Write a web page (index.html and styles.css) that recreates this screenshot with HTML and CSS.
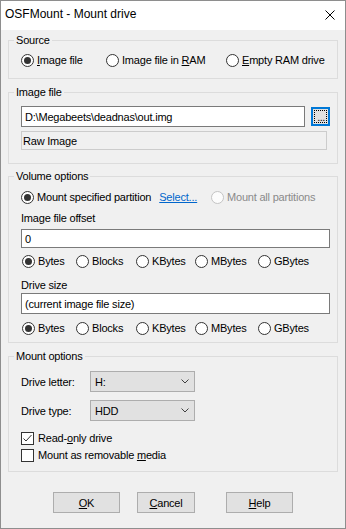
FILE: index.html
```html
<!DOCTYPE html>
<html>
<head>
<meta charset="utf-8">
<title>OSFMount - Mount drive</title>
<link rel="stylesheet" href="styles.css">
</head>
<body>
<div class="window">
  <div class="titlebar">
    <span class="title">OSFMount - Mount drive</span>
    <svg class="close" width="10" height="10" viewBox="0 0 10 10"><path d="M0.5 0.5L9.5 9.5M9.5 0.5L0.5 9.5" stroke="#000" stroke-width="1" fill="none"/></svg>
  </div>
  <div class="client">
    <fieldset class="group g-source">
      <legend>Source</legend>
      <div class="content row-source">
        <span class="opt"><span class="radio on"></span><span><u>I</u>mage file</span></span>
        <span class="opt"><span class="radio"></span><span>Image file in <u>R</u>AM</span></span>
        <span class="opt"><span class="radio"></span><span><u>E</u>mpty RAM drive</span></span>
      </div>
    </fieldset>

    <fieldset class="group g-file">
      <legend>Image file</legend>
      <div class="content">
        <div class="filerow">
          <div class="input file-input">D:\Megabeets\deadnas\out.img</div>
          <div class="browse"><span class="focus">...</span></div>
        </div>
        <div class="readonly">Raw Image</div>
      </div>
    </fieldset>

    <fieldset class="group g-volume">
      <legend>Volume options</legend>
      <div class="content">
        <div class="row-part">
          <span class="opt"><span class="radio on"></span><span>Mount specified partition</span><a class="link">Select...</a></span>
          <span class="opt disabled"><span class="radio dis"></span><span>Mount all partitions</span></span>
        </div>
        <div class="lbl lbl-offset">Image file offset</div>
        <div class="input offset-input">0</div>
        <div class="row-units units-1">
          <span class="opt"><span class="radio on"></span><span>Bytes</span></span>
          <span class="opt"><span class="radio"></span><span>Blocks</span></span>
          <span class="opt"><span class="radio"></span><span>KBytes</span></span>
          <span class="opt"><span class="radio"></span><span>MBytes</span></span>
          <span class="opt"><span class="radio"></span><span>GBytes</span></span>
        </div>
        <div class="lbl lbl-size">Drive size</div>
        <div class="input size-input">(current image file size)</div>
        <div class="row-units units-2">
          <span class="opt"><span class="radio on"></span><span>Bytes</span></span>
          <span class="opt"><span class="radio"></span><span>Blocks</span></span>
          <span class="opt"><span class="radio"></span><span>KBytes</span></span>
          <span class="opt"><span class="radio"></span><span>MBytes</span></span>
          <span class="opt"><span class="radio"></span><span>GBytes</span></span>
        </div>
      </div>
    </fieldset>

    <fieldset class="group g-mount">
      <legend>Mount options</legend>
      <div class="content">
        <div class="mrow">
          <span>Drive letter:</span>
          <div class="select"><span>H:</span><svg width="8" height="5" viewBox="0 0 8 5"><path d="M0.5 0.5L4 4L7.5 0.5" stroke="#404040" fill="none"/></svg></div>
        </div>
        <div class="mrow mrow-2">
          <span>Drive type:</span>
          <div class="select"><span>HDD</span><svg width="8" height="5" viewBox="0 0 8 5"><path d="M0.5 0.5L4 4L7.5 0.5" stroke="#404040" fill="none"/></svg></div>
        </div>
        <div class="crow crow-1">
          <span class="check"><svg width="11" height="11" viewBox="0 0 11 11"><path d="M1.5 5.5L4 8L9.5 2" stroke="#333" stroke-width="1" fill="none"/></svg></span>
          <span>Read-<u>o</u>nly drive</span>
        </div>
        <div class="crow crow-2">
          <span class="check"></span>
          <span>Mount as removable <u>m</u>edia</span>
        </div>
      </div>
    </fieldset>

    <div class="buttons">
      <div class="btn btn-ok"><span><u>O</u>K</span></div>
      <div class="btn btn-cancel"><span><u>C</u>ancel</span></div>
      <div class="btn btn-help"><span><u>H</u>elp</span></div>
    </div>
  </div>
</div>
</body>
</html>
```

FILE: styles.css
```css
* { box-sizing: border-box; }
html, body { margin: 0; padding: 0; }
body {
  width: 346px;
  height: 529px;
  font-family: "Liberation Sans", Arial, sans-serif;
  font-size: 11px;
  color: #000;
  background: #fff;
}
.window {
  width: 346px;
  height: 529px;
  border: 1px solid #8e8e8e;
  background: #f0f0f0;
  display: flex;
  flex-direction: column;
}
.titlebar {
  flex: none;
  height: 29px;
  background: #fff;
  display: flex;
  align-items: center;
  justify-content: space-between;
  padding: 0 10px 3px 4px;
}
.title { font-size: 12px; }
.close { display: block; margin-top: 1px; }

.client {
  flex: 1;
  padding: 3px 7px 0 7px;
  display: flex;
  flex-direction: column;
  letter-spacing: -0.2px;
}

.group {
  margin: 0;
  min-width: 0;
  border: 1px solid #dcdcdc;
  padding: 0 7px 0 5px;
}
.group legend {
  padding: 0 2px;
  height: 14px;
  line-height: 14px;
}
.content { margin-left: 7px; }

.g-source { padding-top: 6px; padding-bottom: 11px; }
.g-file { margin-top: 6px; padding-top: 7px; padding-bottom: 13px; }
.g-volume { margin-top: 5px; padding-top: 7px; padding-bottom: 7px; }
.g-mount { margin-top: 6px; padding-top: 8px; padding-bottom: 9px; }

.opt {
  display: flex;
  align-items: center;
  gap: 3px;
  white-space: nowrap;
  height: 14px;
}
.radio {
  flex: none;
  width: 13px;
  height: 13px;
  border: 1px solid #333;
  border-radius: 50%;
  background: #fff;
  display: flex;
  align-items: center;
  justify-content: center;
}
.radio.on::after {
  content: "";
  width: 7px;
  height: 7px;
  border-radius: 50%;
  background: #333;
}
.radio.dis { border-color: #c4c4c4; background: #fcfcfc; }
.disabled { color: #8a8a8a; }

.row-source {
  display: grid;
  grid-template-columns: 85px 120px auto;
  height: 14px;
  align-items: center;
}

.input {
  background: #fff;
  border: 1px solid #7a7a7a;
  display: flex;
  align-items: center;
  padding-left: 3px;
  white-space: nowrap;
}
.filerow { display: flex; gap: 6px; align-items: flex-start; }
.file-input { width: 284px; height: 21px; }
.browse {
  margin-top: 1px;
  width: 19px;
  height: 19px;
  border: 2px solid #0078d7;
  background: #e1e1e1;
  padding: 1px;
}
.focus {
  display: flex;
  width: 13px;
  height: 13px;
  border: 1px dotted #000;
  justify-content: center;
  align-items: flex-end;
  font-size: 11px;
  line-height: 9px;
  letter-spacing: -0.5px;
  padding-left: 1px;
}
.readonly {
  margin-top: 4px;
  width: 306px;
  height: 19px;
  border: 1px solid #cccccc;
  background: #f0f0f0;
  padding-left: 1px;
  display: flex;
  align-items: center;
}

.row-part {
  display: grid;
  grid-template-columns: 190px auto;
  height: 14px;
  align-items: center;
}
.link {
  color: #0066cc;
  text-decoration: underline;
  margin-left: 5px;
}
.lbl { height: 14px; line-height: 14px; }
.lbl-offset { margin-top: 7px; }
.offset-input { margin-top: 4px; width: 309px; height: 19px; }
.row-units {
  display: grid;
  grid-template-columns: 54px 60px 59px 63px auto;
  height: 14px;
  align-items: center;
  margin-left: 1px;
}
.units-1 { margin-top: 6px; }
.lbl-size { margin-top: 10px; }
.size-input { margin-top: 1px; width: 309px; height: 21px; }
.units-2 { margin-top: 7px; }

.mrow {
  display: grid;
  grid-template-columns: 69px 105px;
  align-items: center;
  height: 21px;
}
.mrow-2 { margin-top: 8px; }
.select {
  height: 21px;
  border: 1px solid #adadad;
  background: #e1e1e1;
  display: flex;
  align-items: center;
  justify-content: space-between;
  padding: 0 5px 0 4px;
}
.select svg { display: block; }
.crow {
  display: flex;
  align-items: center;
  gap: 4px;
  height: 14px;
}
.crow-1 { margin-top: 10px; }
.crow-2 { margin-top: 3px; }
.check {
  flex: none;
  width: 13px;
  height: 13px;
  border: 1px solid #333;
  background: #fff;
}
.check svg { display: block; }

.buttons {
  display: flex;
  margin-top: 20px;
  padding-left: 45px;
}
.btn {
  height: 21px;
  border: 1px solid #adadad;
  background: #e1e1e1;
  display: flex;
  align-items: center;
  justify-content: center;
}
.btn-ok { width: 67px; }
.btn-cancel { width: 58px; margin-left: 17px; }
.btn-help { width: 67px; margin-left: 31px; }
```
